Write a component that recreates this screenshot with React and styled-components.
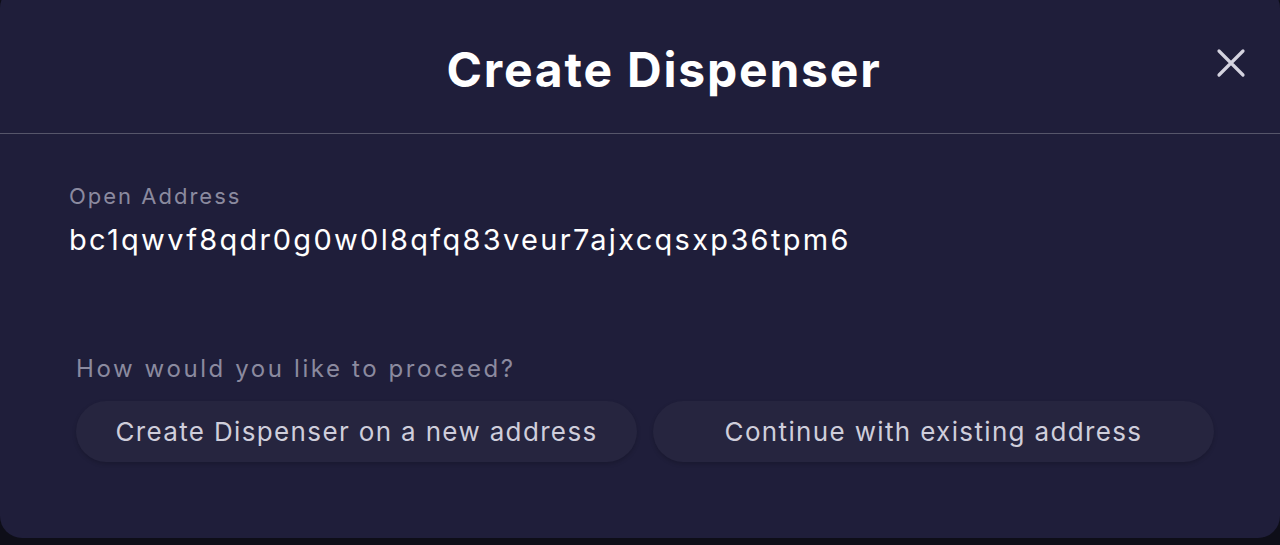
import React from "react";
import styled, { createGlobalStyle } from "styled-components";

const Global = createGlobalStyle`
  html, body { margin: 0; padding: 0; background: #0e0e18; }
  body { font-family: Inter, "Open Sans", sans-serif; overflow: hidden; }
  * { box-sizing: border-box; }
`;

const Page = styled.div`
  width: 1280px;
  height: 545px;
  background: #0e0e18;
  overflow: hidden;
`;

const Modal = styled.div`
  margin-top: -14px;
  width: 1280px;
  height: 552px;
  background: #1f1e3a;
  border-radius: 22px;
  display: flex;
  flex-direction: column;
`;

const Header = styled.header`
  position: relative;
  height: 148px;
  padding-top: 20px;
  padding-left: 48px;
  display: flex;
  align-items: center;
  justify-content: center;
  border-bottom: 1.5px solid #56566a;
`;

const Title = styled.h1`
  margin: 0;
  font-family: Inter, sans-serif;
  font-weight: 700;
  font-size: 48px;
  line-height: 56px;
  color: #ffffff;
  letter-spacing: 1.8px;
`;

const CloseButton = styled.button`
  position: absolute;
  right: 32px;
  top: 60px;
  width: 34px;
  height: 34px;
  padding: 0;
  border: none;
  background: none;
  display: flex;
  align-items: center;
  justify-content: center;
  cursor: pointer;
`;

const Body = styled.div`
  padding: 48px 66px 0 69px;
  display: flex;
  flex-direction: column;
`;

const Label = styled.div`
  font-size: 22px;
  line-height: 28px;
  color: #8b8a9f;
  letter-spacing: 2px;
`;

const Address = styled.div`
  margin-top: 12px;
  font-size: 29px;
  line-height: 36px;
  color: #ffffff;
  letter-spacing: 2.3px;
`;

const Question = styled.div`
  margin-top: 96px;
  margin-left: 7px;
  font-size: 24px;
  line-height: 30px;
  color: #8b8a9f;
  letter-spacing: 2.6px;
`;

const Actions = styled.div`
  margin-top: 17px;
  margin-left: 7px;
  display: grid;
  grid-template-columns: 1fr 1fr;
  gap: 16px;
`;

const ActionButton = styled.button`
  height: 61px;
  border: none;
  border-radius: 31px;
  background: #26253f;
  box-shadow: 0 2px 4px rgba(0, 0, 0, 0.18);
  color: #cfcedb;
  font-family: Inter, sans-serif;
  font-size: 26px;
  letter-spacing: 1.35px;
  cursor: pointer;
`;

export default function App() {
  return (
    <Page>
      <Global />
      <Modal>
        <Header>
          <Title>Create Dispenser</Title>
          <CloseButton aria-label="Close">
            <svg width="30" height="30" viewBox="0 0 30 30">
              <path
                d="M3 3 L27 27 M27 3 L3 27"
                stroke="#d4d3df"
                strokeWidth="3.2"
                strokeLinecap="round"
              />
            </svg>
          </CloseButton>
        </Header>
        <Body>
          <Label>Open Address</Label>
          <Address>bc1qwvf8qdr0g0w0l8qfq83veur7ajxcqsxp36tpm6</Address>
          <Question>How would you like to proceed?</Question>
          <Actions>
            <ActionButton>Create Dispenser on a new address</ActionButton>
            <ActionButton>Continue with existing address</ActionButton>
          </Actions>
        </Body>
      </Modal>
    </Page>
  );
}
